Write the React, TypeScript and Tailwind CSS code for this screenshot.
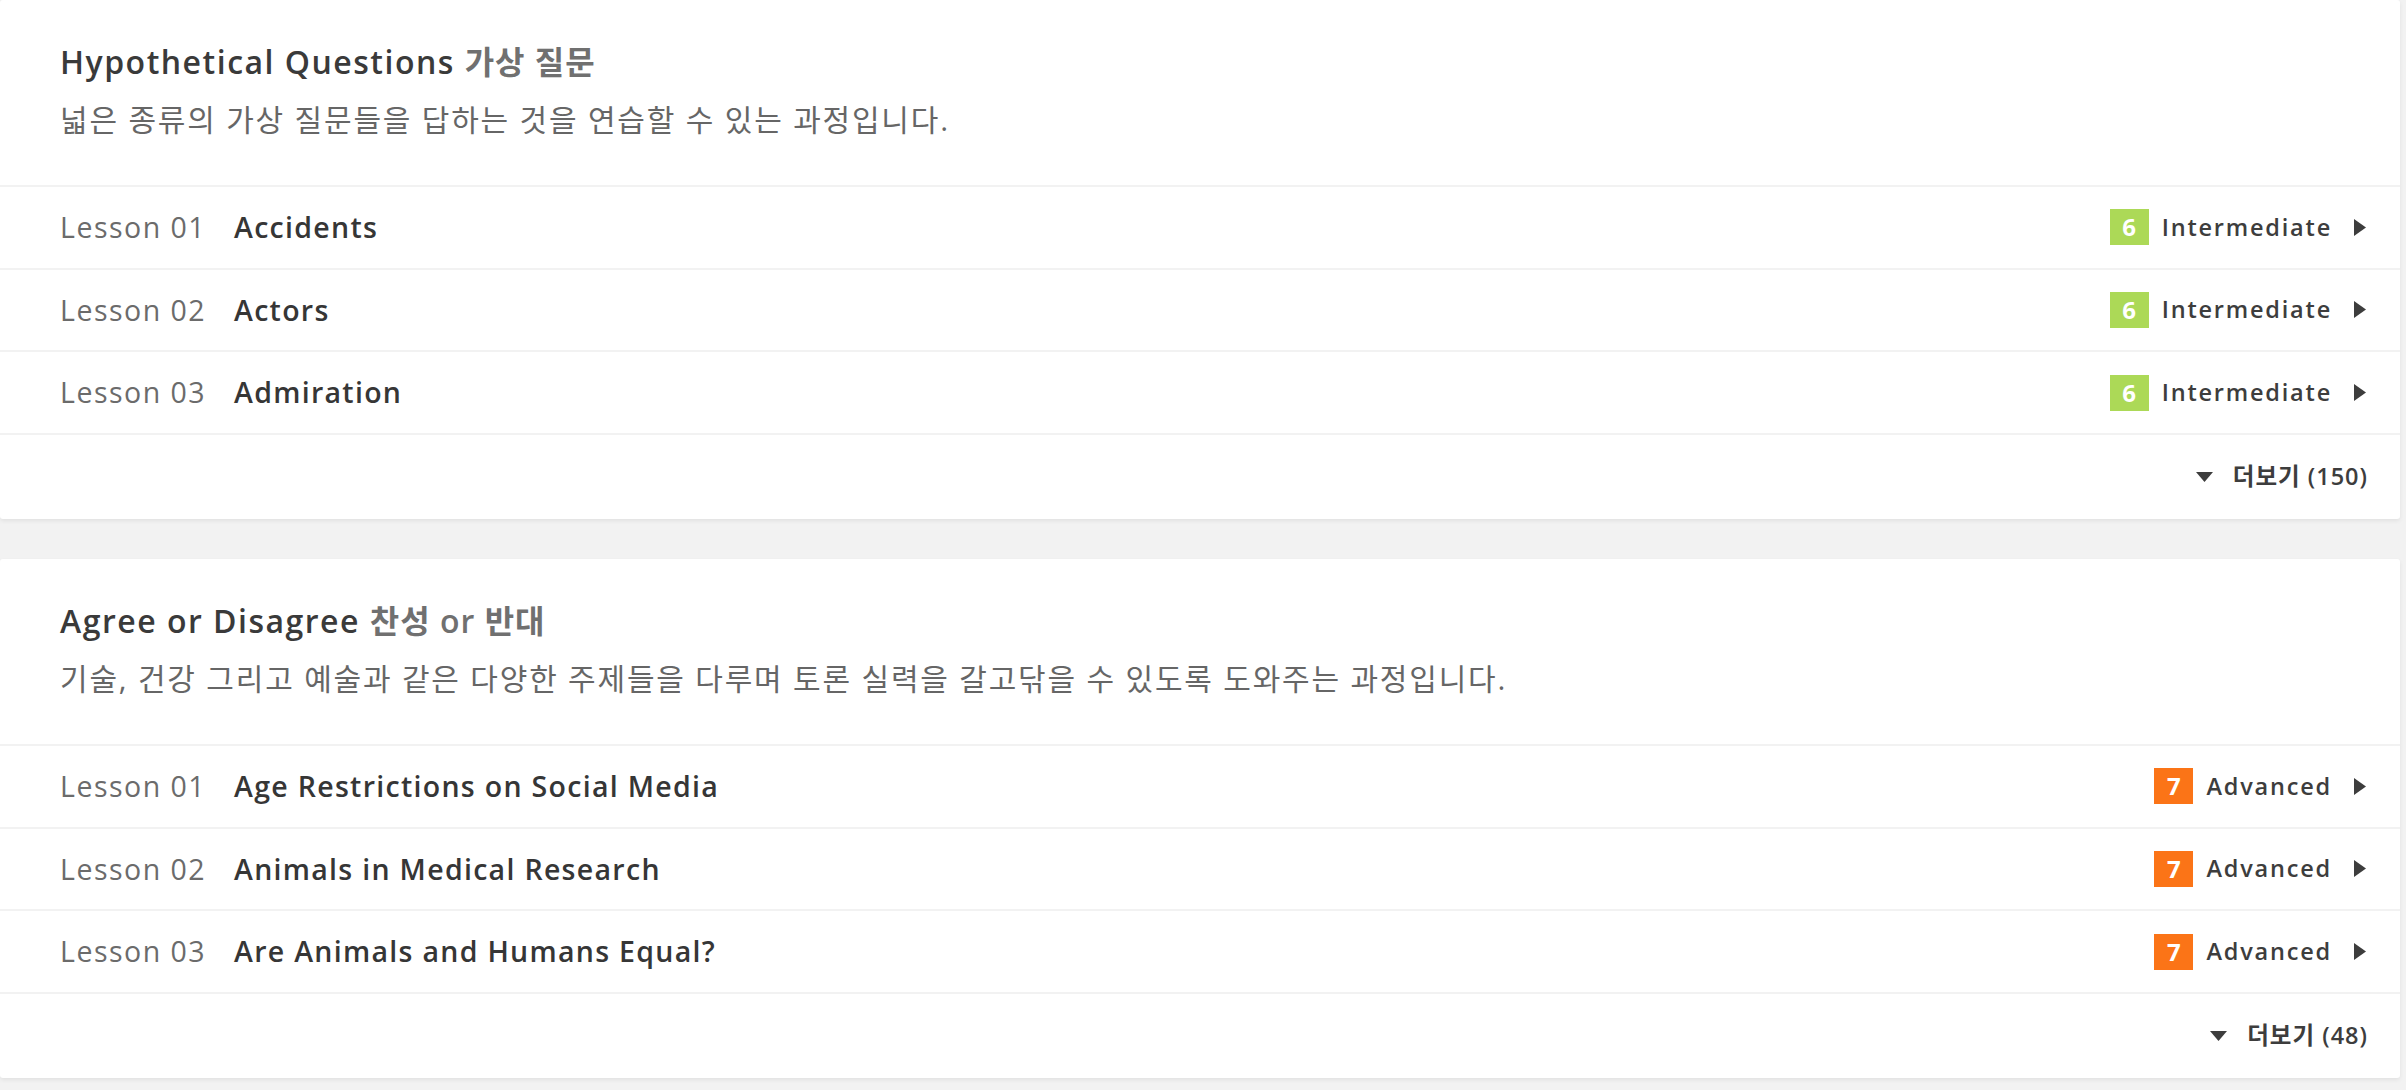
import React from "react";

type Lesson = { no: string; title: string };
type Section = {
  en: string;
  ko: React.ReactNode;
  desc: string;
  level: number;
  levelName: string;
  badge: string;
  lessons: Lesson[];
  more: number;
};

const sections: Section[] = [
  {
    en: "Hypothetical Questions",
    ko: "가상 질문",
    desc: "넓은 종류의 가상 질문들을 답하는 것을 연습할 수 있는 과정입니다.",
    level: 6,
    levelName: "Intermediate",
    badge: "bg-[#acd957]",
    lessons: [
      { no: "01", title: "Accidents" },
      { no: "02", title: "Actors" },
      { no: "03", title: "Admiration" },
    ],
    more: 150,
  },
  {
    en: "Agree or Disagree",
    ko: "찬성 or 반대",
    desc: "기술, 건강 그리고 예술과 같은 다양한 주제들을 다루며 토론 실력을 갈고닦을 수 있도록 도와주는 과정입니다.",
    level: 7,
    levelName: "Advanced",
    badge: "bg-[#fb7417]",
    lessons: [
      { no: "01", title: "Age Restrictions on Social Media" },
      { no: "02", title: "Animals in Medical Research" },
      { no: "03", title: "Are Animals and Humans Equal?" },
    ],
    more: 48,
  },
];

function RightArrow() {
  return (
    <svg width="12" height="17" viewBox="0 0 12 17" className="block">
      <path d="M0 0 L12 8.5 L0 17 Z" fill="#3d3d3d" />
    </svg>
  );
}

function DownArrow() {
  return (
    <svg width="17" height="10" viewBox="0 0 17 10" className="block">
      <path d="M0 0 L17 0 L8.5 10 Z" fill="#3d3d3d" />
    </svg>
  );
}

function Card({ s }: { s: Section }) {
  return (
    <div className="bg-white rounded-[3px] shadow-[0_2px_4px_rgba(0,0,0,0.07)]">
      <div className="h-[185px] pl-[60px] flex flex-col">
        <div className="pt-[40px] text-[32px] leading-[44px] font-semibold text-[#3a3a3a] tracking-[1.5px]">
          {s.en} <span className="text-[#707070] tracking-[1px]">{s.ko}</span>
        </div>
        <div className="mt-[16px] text-[30px] leading-[40px] text-[#666666] tracking-[1.8px]">{s.desc}</div>
      </div>
      {s.lessons.map((l) => (
        <div
          key={l.no}
          className="h-[82.67px] border-t-2 border-[#f2f2f2] pl-[60px] pr-[34px] flex items-center"
        >
          <span className="text-[28.5px] text-[#6b6b6b] w-[174px] shrink-0 tracking-[1.5px]">Lesson {l.no}</span>
          <span className="text-[28.5px] font-semibold text-[#363636] tracking-[1.3px]">{l.title}</span>
          <div className="ml-auto flex items-center">
            <span
              className={`${s.badge} w-[39px] h-[36px] flex items-center justify-center text-white text-[24px] font-bold`}
            >
              {s.level}
            </span>
            <span className="ml-[13px] text-[23.5px] font-semibold text-[#3d3d3d] tracking-[1.8px]">
              {s.levelName}
            </span>
            <span className="ml-[22px]">
              <RightArrow />
            </span>
          </div>
        </div>
      ))}
      <div className="h-[86px] border-t-2 border-[#f2f2f2] pr-[32px] flex items-center justify-end">
        <DownArrow />
        <span className="ml-[20px] text-[23.5px] font-semibold text-[#3d3d3d] tracking-[1px]">
          더보기 ({s.more})
        </span>
      </div>
    </div>
  );
}

export default function App() {
  return (
    <div
      className="min-h-screen bg-[#f2f2f2] pr-[6px] flex flex-col gap-[40px]"
      style={{ fontFamily: '"Open Sans", "Noto Sans CJK KR", sans-serif' }}
    >
      {sections.map((s, i) => (
        <Card key={i} s={s} />
      ))}
    </div>
  );
}
